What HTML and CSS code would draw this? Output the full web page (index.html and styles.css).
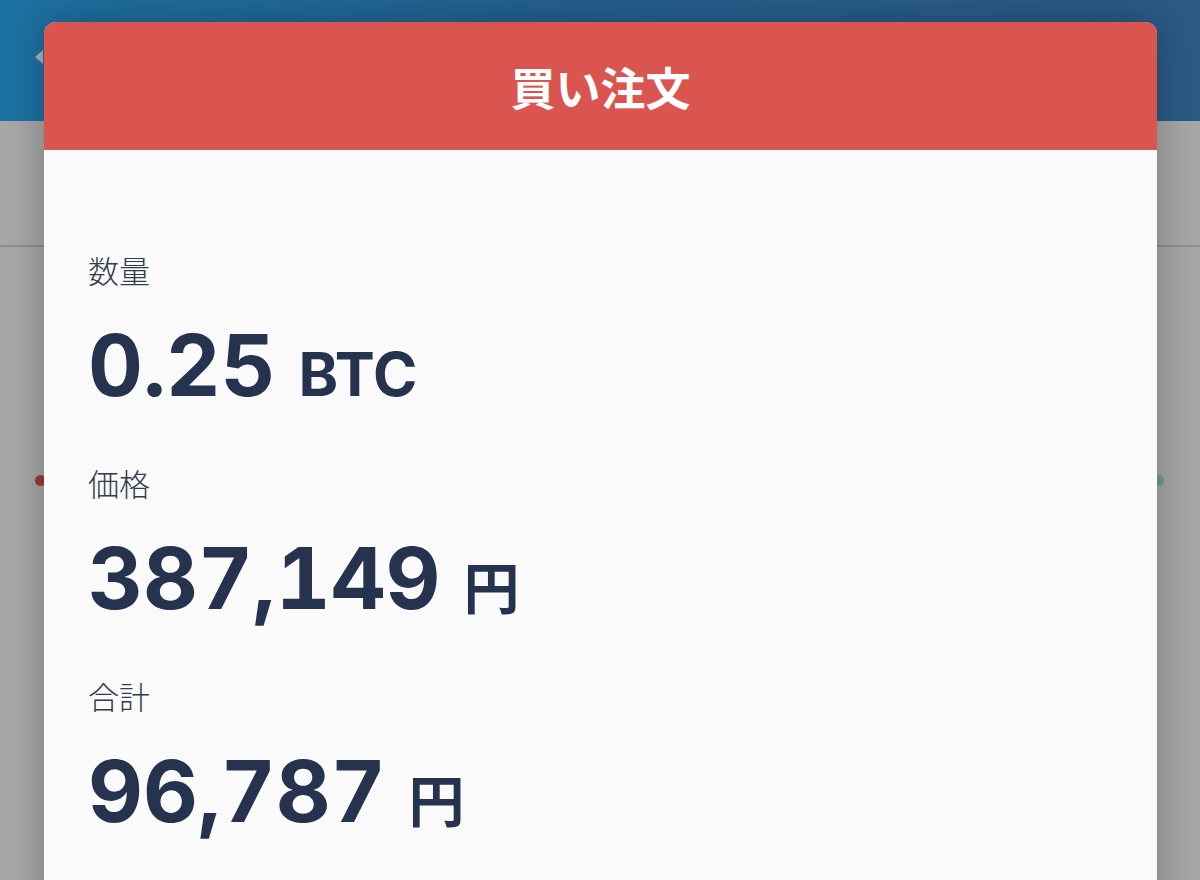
FILE: index.html
```html
<!DOCTYPE html>
<html lang="ja">
<head>
<meta charset="utf-8">
<title>買い注文</title>
<link rel="stylesheet" href="styles.css">
</head>
<body>
<div class="app">
  <div class="topbar"><span class="back"></span></div>
  <div class="content">
    <div class="tabs"></div>
    <div class="chart">
      <span class="dot dot-red"></span>
      <span class="dot dot-green"></span>
    </div>
  </div>

  <div class="modal">
    <div class="modal-header">買い注文</div>
    <div class="modal-body">
      <div class="field">
        <div class="label">数量</div>
        <div class="value">0.25 <span class="unit unit-latin">BTC</span></div>
      </div>
      <div class="field">
        <div class="label">価格</div>
        <div class="value">387,149 <span class="unit unit-cjk">円</span></div>
      </div>
      <div class="field">
        <div class="label">合計</div>
        <div class="value">96,787 <span class="unit unit-cjk">円</span></div>
      </div>
    </div>
  </div>
</div>
</body>
</html>
```
FILE: styles.css
```css
* { box-sizing: border-box; }
html, body { margin: 0; padding: 0; }
body {
  width: 1200px;
  height: 880px;
  overflow: hidden;
  font-family: "Inter", "Noto Sans CJK JP", sans-serif;
  background: #a6a6a6;
}
.app {
  position: relative;
  width: 1200px;
  height: 880px;
  overflow: hidden;
}
.topbar {
  height: 121px;
  background: linear-gradient(90deg, #1d72a3 0%, #245f8e 50%, #2b5a85 100%);
  position: relative;
}
.back {
  position: absolute;
  left: 35px;
  top: 50px;
  width: 0;
  height: 0;
  border-top: 7px solid transparent;
  border-bottom: 7px solid transparent;
  border-right: 8px solid #a9b4bd;
}
.content {
  height: 759px;
  background: #a7a7a7;
}
.tabs {
  height: 126px;
  border-bottom: 2px solid #8d8d8d;
}
.chart { position: relative; height: 600px; }
.dot {
  position: absolute;
  width: 11px;
  height: 11px;
  border-radius: 50%;
  top: 228px;
}
.dot-red { left: 35px; background: #9a3b37; }
.dot-green { left: 1153px; background: #6f9c8f; }

.modal {
  position: absolute;
  left: 44px;
  top: 22px;
  width: 1113px;
  height: 900px;
  border-radius: 12px 12px 0 0;
  overflow: hidden;
  background: #fafafa;
  box-shadow: 0 0 40px rgba(0, 0, 0, 0.28);
}
.modal-header {
  height: 128px;
  background: #da5550;
  color: #ffffff;
  display: flex;
  align-items: center;
  justify-content: center;
  font-family: "Noto Sans CJK JP", sans-serif;
  font-weight: 700;
  font-size: 45px;
}
.modal-body {
  padding: 100px 0 0 44px;
}
.field {
  margin-bottom: 47px;
}
.label {
  font-family: "Noto Sans CJK JP", sans-serif;
  font-weight: 300;
  font-size: 31px;
  line-height: 40px;
  height: 40px;
  color: #333b4c;
  margin-bottom: 26px;
}
.value {
  font-family: "Inter", sans-serif;
  font-weight: 700;
  font-size: 85px;
  line-height: 100px;
  height: 100px;
  color: #26334f;
  font-variant-numeric: tabular-nums;
  letter-spacing: 0;
  white-space: nowrap;
}
.unit { color: #26334f; }
.unit-latin {
  font-family: "Inter", sans-serif;
  font-weight: 700;
  font-size: 60px;
}
.unit-cjk {
  font-family: "Noto Sans CJK JP", sans-serif;
  font-weight: 700;
  font-size: 56px;
}
```
